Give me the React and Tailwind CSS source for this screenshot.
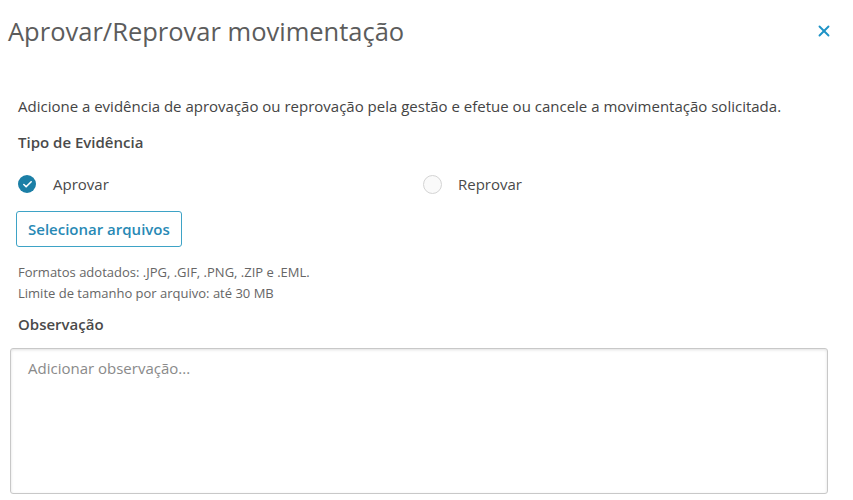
import { Check, X } from 'lucide-react';

export default function App() {
  return (
    <div className="w-[853px] h-[500px] bg-white overflow-hidden text-[#4a4a4a]" style={{ fontFamily: '"Open Sans", "Noto Sans", sans-serif' }}>
      {/* header */}
      <div className="flex items-center justify-between pl-[8px] pr-[20px] pt-[12px] h-[52px]">
        <h1 className="text-[25.5px] font-normal text-[#5c5c5c] leading-none">Aprovar/Reprovar movimentação</h1>
        <button className="text-[#1e93c6] -mt-[2px]">
          <X size={18} strokeWidth={2.5} />
        </button>
      </div>

      <div className="px-[18px] pt-[44px]">
        <p className="text-[15px] leading-[20px] text-[#444]">
          Adicione a evidência de aprovação ou reprovação pela gestão e efetue ou cancele a movimentação solicitada.
        </p>

        <p className="mt-[16px] text-[15px] leading-[20px] font-semibold text-[#4a4a4a]">Tipo de Evidência</p>

        {/* radios */}
        <div className="mt-[20px] flex items-center h-[24px]">
          <label className="flex items-center w-[405px]">
            <span className="w-[18px] h-[18px] rounded-full bg-[#1b7fa6] flex items-center justify-center">
              <Check size={11} strokeWidth={3.5} className="text-white" />
            </span>
            <span className="ml-[17px] text-[15px] text-[#4a4a4a]">Aprovar</span>
          </label>
          <label className="flex items-center">
            <span className="w-[19px] h-[19px] rounded-full border border-[#d4d4d4] bg-[#fafafa]"></span>
            <span className="ml-[16px] text-[15px] text-[#4a4a4a]">Reprovar</span>
          </label>
        </div>

        <button className="mt-[15px] -ml-[2px] h-[36px] px-[11px] rounded-[3px] border border-[#3ea3c6] text-[15px] font-semibold text-[#2889b5]">
          Selecionar arquivos
        </button>

        <div className="mt-[15px] text-[13px] leading-[21px] text-[#666]">
          <p>Formatos adotados: .JPG, .GIF, .PNG, .ZIP e .EML.</p>
          <p>Limite de tamanho por arquivo: até 30 MB</p>
        </div>

        <p className="mt-[10px] text-[15px] leading-[20px] font-semibold text-[#4a4a4a]">Observação</p>
      </div>

      <div className="pl-[10px] pr-[25px] mt-[14px]">
        <textarea
          placeholder="Adicionar observação..."
          className="w-full h-[146px] resize-none rounded-[3px] border border-[#c8c8c8] shadow-[inset_0_1px_3px_rgba(0,0,0,0.12)] px-[17px] py-[8px] text-[15px] text-[#555] placeholder-[#8a8a8a] outline-none"
          style={{ fontFamily: '"Open Sans", sans-serif' }}
        />
      </div>
    </div>
  );
}
